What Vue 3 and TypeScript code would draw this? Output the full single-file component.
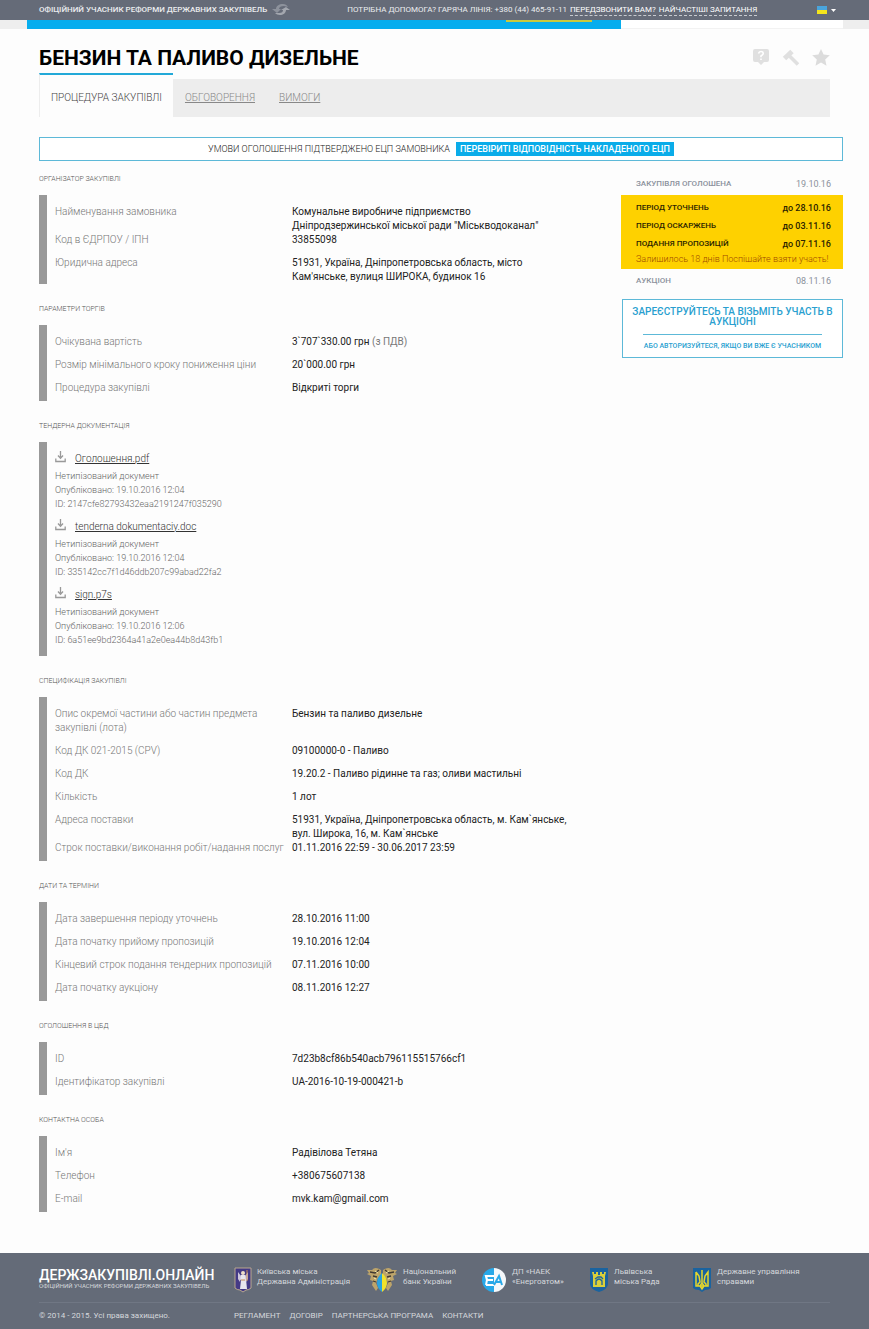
<script setup lang="ts">
interface Row { label: string; value: string; note?: string }
interface Section { title: string; rows: Row[] }
interface Doc { name: string; published: string; id: string }

const tabs: string[] = ['Обговорення', 'Вимоги']

const before: Section[] = [
  {
    title: 'Організатор закупівлі',
    rows: [
      { label: 'Найменування замовника', value: 'Комунальне виробниче підприємство Дніпродзержинської міської ради "Міськводоканал"' },
      { label: 'Код в ЄДРПОУ / ІПН', value: '33855098' },
      { label: 'Юридична адреса', value: "51931, Україна, Дніпропетровська область, місто Кам'янське, вулиця ШИРОКА, будинок 16" },
    ],
  },
  {
    title: 'Параметри торгів',
    rows: [
      { label: 'Очікувана вартість', value: '3`707`330.00 грн', note: '(з ПДВ)' },
      { label: 'Розмір мінімального кроку пониження ціни', value: '20`000.00 грн' },
      { label: 'Процедура закупівлі', value: 'Відкриті торги' },
    ],
  },
]

const docs: Doc[] = [
  { name: 'Оголошення.pdf', published: '19.10.2016 12:04', id: '2147cfe82793432eaa2191247f035290' },
  { name: 'tenderna dokumentaciy.doc', published: '19.10.2016 12:04', id: '335142cc7f1d46ddb207c99abad22fa2' },
  { name: 'sign.p7s', published: '19.10.2016 12:06', id: '6a51ee9bd2364a41a2e0ea44b8d43fb1' },
]

const after: Section[] = [
  {
    title: 'Специфікація закупівлі',
    rows: [
      { label: 'Опис окремої частини або частин предмета закупівлі (лота)', value: 'Бензин та паливо дизельне' },
      { label: 'Код ДК 021-2015 (CPV)', value: '09100000-0 - Паливо' },
      { label: 'Код ДК', value: '19.20.2 - Паливо рідинне та газ; оливи мастильні' },
      { label: 'Кількість', value: '1 лот' },
      { label: 'Адреса поставки', value: '51931, Україна, Дніпропетровська область, м. Кам`янське, вул. Широка, 16, м. Кам`янське' },
      { label: 'Строк поставки/виконання робіт/надання послуг', value: '01.11.2016 22:59 - 30.06.2017 23:59' },
    ],
  },
  {
    title: 'Дати та терміни',
    rows: [
      { label: 'Дата завершення періоду уточнень', value: '28.10.2016 11:00' },
      { label: 'Дата початку прийому пропозицій', value: '19.10.2016 12:04' },
      { label: 'Кінцевий строк подання тендерних пропозицій', value: '07.11.2016 10:00' },
      { label: 'Дата початку аукціону', value: '08.11.2016 12:27' },
    ],
  },
  {
    title: 'Оголошення в ЦБД',
    rows: [
      { label: 'ID', value: '7d23b8cf86b540acb796115515766cf1' },
      { label: 'Ідентифікатор закупівлі', value: 'UA-2016-10-19-000421-b' },
    ],
  },
  {
    title: 'Контактна особа',
    rows: [
      { label: "Ім'я", value: 'Радівілова Тетяна' },
      { label: 'Телефон', value: '+380675607138' },
      { label: 'E-mail', value: 'mvk.kam@gmail.com' },
    ],
  },
]

const periods = [
  { name: 'Період уточнень', date: 'до 28.10.16' },
  { name: 'Період оскаржень', date: 'до 03.11.16' },
  { name: 'Подання пропозицій', date: 'до 07.11.16' },
]

const footerLinks: string[] = ['Регламент', 'Договір', 'Партнерська програма', 'Контакти']
</script>

<template>
  <div class="page">
    <header class="topbar">
      <span class="member">Офіційний учасник реформи державних закупівель</span>
      <svg class="swirl" width="20" height="14" viewBox="0 0 20 14">
        <path d="M1 6h4c0-3 3-5 7-5 2 0 4 1 5 3l-4-1c-3 0-5 1-5 3h2l-4 4z" fill="#8d929c" />
        <path d="M19 7h-4c0 3-3 5-6 5-2 0-4-1-5-2l4 0c3 0 4-1 4-3h-2l5-3z" fill="#a3a7af" />
      </svg>
      <div class="help">
        <span>Потрібна допомога? Гаряча лінія: +380 (44) 465-91-11</span>
        <a href="#">Передзвонити вам?</a>
        <a href="#">Найчастіші запитання</a>
      </div>
      <button class="lang" type="button" aria-label="Мова">
        <svg width="20" height="8" viewBox="0 0 20 8">
          <rect width="10" height="4" fill="#4aa5dc" />
          <rect y="4" width="10" height="4" fill="#f4e51c" />
          <path d="M14 3h5l-2.500 3z" fill="#fff" />
        </svg>
      </button>
    </header>

    <div class="strip">
      <div class="strip-blue"><i></i></div>
      <div class="strip-white"></div>
    </div>

    <main>
      <div class="headline">
        <h1>Бензин та паливо дизельне</h1>
        <div class="actions">
          <button type="button" aria-label="Поставити запитання">
            <svg width="18" height="18" viewBox="0 0 18 18">
              <path d="M3 0h12q2 0 2 2v9q0 2-2 2h-3l-3 3-3-3H3q-2 0-2-2V2q0-2 2-2z" fill="#e0e0e0" />
              <path d="M6.500 4.500Q7 2.500 9 2.500t2.300 1.800Q11.300 5.500 9 7v1.300M9 9.500v1.500" fill="none" stroke="#fff" stroke-width="1.600" />
            </svg>
          </button>
          <button type="button" aria-label="Аукціон">
            <svg width="18" height="18" viewBox="0 0 18 18">
              <path d="M2.500 9.500L10 2.500" stroke="#e0e0e0" stroke-width="5" />
              <path d="M7 6.500l9 9" stroke="#e0e0e0" stroke-width="3.600" />
            </svg>
          </button>
          <button type="button" aria-label="В обране">
            <svg width="18" height="18" viewBox="0 0 18 18">
              <path d="M9 0l2.600 5.600 6.200.7-4.600 4.200 1.300 6.200L9 13.600l-5.500 3.100 1.300-6.200L.2 6.300l6.200-.7z" fill="#dcdcdc" />
            </svg>
          </button>
        </div>
      </div>

      <nav class="tabs">
        <a class="active" href="#">Процедура закупівлі</a>
        <a v-for="t in tabs" :key="t" href="#">{{ t }}</a>
      </nav>

      <div class="ecp">
        <span>Умови оголошення підтверджено ЕЦП замовника</span>
        <button type="button">Перевіриті відповідність накладеного ЕЦП</button>
      </div>

      <div class="columns">
        <div class="details">
          <section v-for="s in before" :key="s.title">
            <h2>{{ s.title }}</h2>
            <dl>
              <div v-for="r in s.rows" :key="r.label" class="row">
                <dt>{{ r.label }}</dt>
                <dd>{{ r.value }} <small v-if="r.note">{{ r.note }}</small></dd>
              </div>
            </dl>
          </section>

          <section>
            <h2>Тендерна документація</h2>
            <ul class="docs">
              <li v-for="d in docs" :key="d.id">
                <div class="doc-name">
                  <svg width="11" height="12" viewBox="0 0 11 12">
                    <path d="M5.500 0v6M3 4.500l2.500 2.800L8 4.500M.8 7.500v3h9.400v-3" fill="none" stroke="#999" stroke-width="1.300" />
                  </svg>
                  <a href="#">{{ d.name }}</a>
                </div>
                <p>Нетипізований документ</p>
                <p>Опубліковано: {{ d.published }}</p>
                <p>ID: {{ d.id }}</p>
              </li>
            </ul>
          </section>

          <section v-for="s in after" :key="s.title">
            <h2>{{ s.title }}</h2>
            <dl>
              <div v-for="r in s.rows" :key="r.label" class="row">
                <dt>{{ r.label }}</dt>
                <dd>{{ r.value }}</dd>
              </div>
            </dl>
          </section>
        </div>

        <aside>
          <div class="stage"><b>Закупівля оголошена</b><span>19.10.16</span></div>
          <div class="current">
            <div v-for="p in periods" :key="p.name" class="period"><b>{{ p.name }}</b><b class="date">{{ p.date }}</b></div>
            <p>Залишилось 18 днів Поспішайте взяти участь!</p>
          </div>
          <div class="stage"><b>Аукціон</b><span>08.11.16</span></div>
          <div class="join">
            <a class="register" href="#">Зареєструйтесь та візьміть участь в аукціоні</a>
            <a class="login" href="#">або авторизуйтеся, якщо ви вже є учасником</a>
          </div>
        </aside>
      </div>
    </main>

    <footer>
      <div class="foot-top">
        <div class="brand">
          <strong>Держзакупівлі.онлайн</strong>
          <span>Офіційний учасник реформи державних закупівель</span>
        </div>
        <div class="partners">
          <div class="partner">
            <svg width="18" height="26" viewBox="0 0 18 26">
              <path d="M1 1h16v20q-2 2-5 2l-3 2-3-2q-3 0-5-2z" fill="#443a86" stroke="#b9a78f" />
              <circle cx="9" cy="6" r="2" fill="#f0dfc8" />
              <path d="M7 8h4l2 3-1 1 1 10H6l1-9-2-1z" fill="#e9e7ee" />
              <path d="M4 5l3 4-1 6-2-3zM14 5l-3 4 1 6 2-3z" fill="#cfc7dc" />
              <path d="M13 3v11M7 13h4" stroke="#c48a55" fill="none" />
            </svg>
            <span>Київська міська<br>Державна Адміністрація</span>
          </div>
          <div class="partner">
            <svg width="32" height="26" viewBox="0 0 32 26">
              <path d="M15 3Q9-1 6 3L1 3l2 3-2 1 4 2-1 4 3 1-1 4 4 6 2-3-2-5 2-5 3-2z" fill="#bda46a" />
              <path d="M17 3q6-4 9 0l5 0-2 3 2 1-4 2 1 4-3 1 1 4-4 6-2-3 2-5-2-5-3-2z" fill="#bda46a" />
              <path d="M4 5l5 1 4-3M7 9l4 1M7 14l3 1M28 5l-5 1-4-3M25 9l-4 1M25 14l-3 1" stroke="#413a31" stroke-width="1.300" fill="none" />
              <path d="M9 4l3 2M8 11l2 1M23 4l-3 2M24 11l-2 1" stroke="#f5e9a8" fill="none" />
              <path d="M16 6q-5 4-5 10 0 5 5 9z" fill="#2aa3e0" />
              <path d="M16 6q5 4 5 10 0 5-5 9z" fill="#f0e22c" />
            </svg>
            <span>Національний<br>банк України</span>
          </div>
          <div class="partner">
            <svg width="26" height="26" viewBox="0 0 26 26">
              <path d="M13 1a12 12 0 0 0 0 24z" fill="#28a8e8" />
              <path d="M13 1a12 12 0 0 1 0 24z" fill="#f4f8fb" />
              <path d="M13 9H5l1 4h6M5 18h8" fill="none" stroke="#fff" stroke-width="2.200" />
              <path d="M5 18l1-5" stroke="#fff" stroke-width="2" />
              <path d="M13 18l5-9 3 9M15 15h5" fill="none" stroke="#28a8e8" stroke-width="2" />
            </svg>
            <span>ДП «НАЕК<br>«Енергоатом»</span>
          </div>
          <div class="partner">
            <svg width="20" height="26" viewBox="0 0 20 26">
              <path d="M1 1h18v16q0 5-9 8-9-3-9-8z" fill="#1a639f" />
              <path d="M4 20V9L3 5h2v2h2V5h2v3h2V5h2v2h2V5h2l-1 4v11z" fill="#d9cf3a" />
              <path d="M7 18v-4q3-4 6 0v4M6 12l3-2h3l2 2" fill="none" stroke="#1a639f" stroke-width="1.300" />
            </svg>
            <span>Львівська<br>міська Рада</span>
          </div>
          <div class="partner">
            <svg width="20" height="26" viewBox="0 0 20 26">
              <path d="M1 1h18v20q-2 2-6 2l-3 2-3-2q-4 0-6-2z" fill="#1a639f" />
              <path d="M4 5v14h12V5l-3 4-1 6 2 2v2M4 5l3 4 1 6-2 2v2M10 3v13l-2 3 2 3 2-3-2-3" fill="none" stroke="#e5d62d" stroke-width="1.500" />
            </svg>
            <span>Державне управління<br>справами</span>
          </div>
        </div>
      </div>
      <div class="foot-bottom">
        <span class="copy">© 2014 - 2015. Усі права захищено.</span>
        <nav><a v-for="l in footerLinks" :key="l" href="#">{{ l }}</a></nav>
      </div>
    </footer>
  </div>
</template>

<style>
body { background: #fdfdfd; }
</style>

<style scoped>
.page { font-family: Roboto, "Noto Sans", sans-serif; font-size: 10px; line-height: 14px; color: #222; }
.page * { box-sizing: border-box; }
h1, h2, p, dl, dd, ul { margin: 0; padding: 0; }
button { font: inherit; border: 0; padding: 0; background: none; color: inherit; cursor: pointer; }
svg { display: block; flex: none; }

.topbar { display: flex; align-items: center; height: 20px; padding: 0 32px 0 39px; background: #656b78; color: #eceef0; font-size: 8px; font-weight: 500; text-transform: uppercase; }
.swirl { margin-left: 4px; }
.help { display: flex; gap: 3px; margin-left: 56px; line-height: 10px; font-weight: 400; }
.help a { color: #fff; text-decoration: none; border-bottom: 1px dashed #c8cbd0; }
.lang { margin-left: auto; }

.strip { display: flex; height: 9px; border: solid #eee; border-width: 0 26px 0 27px; }
.strip-blue { flex: 1; background: #06adee; display: flex; justify-content: flex-end; padding-right: 29px; }
.strip-blue i { width: 86px; height: 2px; background: #c9ca3d; }
.strip-white { width: 222px; background: #fff; border-bottom: 1px solid #f2f2f2; }

main { padding: 0 26px 22px 39px; }
.headline { display: flex; align-items: center; justify-content: space-between; height: 44px; padding: 14px 13px 0 0; }
h1 { font-size: 21px; line-height: 30px; font-weight: 700; color: #000; text-transform: uppercase; }
.actions { display: flex; gap: 12px; }

.tabs { display: flex; height: 38px; margin: 6px 13px 20px 0; background: #ededed; text-transform: uppercase; line-height: 38px; }
.tabs a { padding: 0 12px; color: #888; font-weight: 300; }
.tabs a.active { margin: -6px 0 0; padding: 4px 11px 0; border-top: 2px solid #22a9d8; background: #fdfdfd; border-left: 1px solid #ededed; color: #444; text-decoration: none; }

.ecp { display: flex; align-items: center; justify-content: center; gap: 6px; height: 24px; border: 1px solid #5db9d8; font-size: 9px; font-weight: 300; text-transform: uppercase; background: #fff; }
.ecp button { padding: 0 4px; line-height: 14px; background: #0aace9; color: #fff; font-weight: 500; text-transform: uppercase; }

.columns { display: flex; align-items: flex-start; justify-content: space-between; }
.details { flex: 1; padding-top: 12px; }
section { margin-bottom: 19px; }
h2 { margin-bottom: 10px; font-size: 7px; line-height: 12px; font-weight: 300; color: #555; text-transform: uppercase; }
dl, .docs { border-left: 8px solid #999; padding-left: 8px; }
dl { padding-top: 10px; }
.row { display: grid; grid-template-columns: 237px 277px; }
dt { padding-bottom: 9px; color: #777; font-weight: 300; }
.row:last-child dt { padding-bottom: 6px; }
dd small { font-size: inherit; color: #777; }
.docs { list-style: none; padding-top: 6px; padding-bottom: 9px; font-size: 9px; font-weight: 300; color: #666; }
.docs li + li { margin-top: 5px; }
.doc-name { display: flex; align-items: center; gap: 9px; font-size: 10px; line-height: 21px; }
.doc-name svg { margin-bottom: 4px; }
.doc-name a { color: #333; }

aside { width: 222px; padding-top: 16px; font-size: 8px; }
.stage, .period { display: flex; justify-content: space-between; text-transform: uppercase; }
.stage { padding: 0 12px 0 15px; color: #8b919c; }
.stage b, .period b { font-weight: 500; }
.stage span, .period .date { font-size: 9px; }
.current { margin: 4px 0 5px; padding: 4px 12px 4px 15px; background: #fed100; color: #2a2300; }
.period { line-height: 18px; }
.date { text-transform: none; }
.current p { line-height: 12px; font-size: 9px; font-weight: 300; color: #a04a00; white-space: nowrap; }
.join { margin: 11px 0 0 1px; border: 1px solid #5db9d8; padding: 7px 9px 4px; text-align: center; background: #fff; text-transform: uppercase; }
.join a { display: block; color: #2a9fd0; text-decoration: none; font-weight: 500; }
.register { font-size: 10px; line-height: 10px; padding-bottom: 7px; }
.join .login { margin: 0 11px; border-top: 1px solid #5db9d8; padding-top: 4px; font-size: 7px; }

footer { padding: 14px 39px 6px; background: #646b78; color: #d5d8dc; font-size: 8px; line-height: 10px; }
.foot-top { display: flex; height: 36px; border-bottom: 1px solid #707784; }
.brand { width: 195px; padding-top: 1px; text-transform: uppercase; }
.brand strong { display: block; font-size: 14px; line-height: 14px; font-weight: 500; color: #fff; }
.brand span { display: block; font-size: 6px; line-height: 8px; }
.partners { flex: 1; display: grid; grid-template-columns: 132fr 115fr 108fr 103fr 138fr; }
.partner { display: flex; gap: 5px; white-space: nowrap; }
.foot-bottom { display: flex; padding-top: 6px; line-height: 14px; }
.copy { width: 195px; }
.foot-bottom nav { display: flex; gap: 9px; text-transform: uppercase; }
.foot-bottom a { color: inherit; text-decoration: none; }
</style>
